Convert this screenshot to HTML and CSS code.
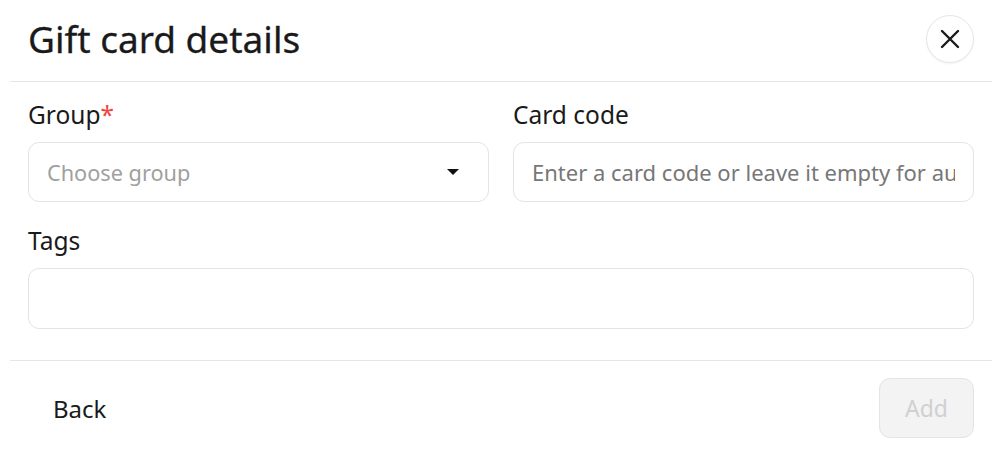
FILE: index.html
```html
<!DOCTYPE html>
<html lang="en">
<head>
  <meta charset="UTF-8" />
  <title>Gift card details</title>
  <link rel="stylesheet" href="styles.css">
</head>
<body>
  <div class="dialog">
    <div class="dialog-header">
      <h1>Gift card details</h1>
      <button class="close-btn" aria-label="Close">
        <svg width="20" height="20" viewBox="0 0 20 20">
          <path d="M2 2 L18 18 M18 2 L2 18" stroke="#1a1a1a" stroke-width="2.4" stroke-linecap="round" fill="none"/>
        </svg>
      </button>
    </div>

    <div class="dialog-body">
      <div class="row two-col">
        <div class="field">
          <label>Group<span class="req">*</span></label>
          <div class="select">
            <span class="placeholder">Choose group</span>
            <span class="caret"></span>
          </div>
        </div>
        <div class="field">
          <label>Card code</label>
          <input class="text-input" type="text" placeholder="Enter a card code or leave it empty for automatic generation">
        </div>
      </div>
      <div class="row">
        <div class="field">
          <label>Tags</label>
          <div class="tags-input"></div>
        </div>
      </div>
    </div>

    <div class="dialog-footer">
      <button class="btn btn-back">Back</button>
      <button class="btn btn-add" disabled>Add</button>
    </div>
  </div>
</body>
</html>
```

FILE: styles.css
```css
body {
  margin: 0;
  background: #fff;
  font-family: 'Noto Sans', sans-serif;
  color: #1a1a1a;
}
.dialog {
  margin: 0 4px 0 10px;
}
.dialog-header {
  display: flex;
  align-items: center;
  justify-content: space-between;
  padding: 15px 18px 18px 18px;
  border-bottom: 1px solid #e6e6e6;
}
.dialog-header h1 {
  margin: 0;
  font-size: 37px;
  font-weight: 400;
  line-height: 48px;
  color: #1a1a1a;
  -webkit-text-stroke: 0.3px #1a1a1a;
}
.close-btn {
  width: 48px;
  height: 48px;
  border-radius: 50%;
  border: 1px solid #e6e6e6;
  background: #fff;
  box-shadow: 0 1px 2px rgba(0,0,0,0.05);
  display: flex;
  align-items: center;
  justify-content: center;
  padding: 0;
  cursor: pointer;
}
.dialog-body {
  padding: 17px 18px 31px 18px;
  border-bottom: 1px solid #e6e6e6;
  display: flex;
  flex-direction: column;
  gap: 23px;
}
.two-col {
  display: grid;
  grid-template-columns: 1fr 1fr;
  gap: 24px;
}
.field label {
  display: block;
  font-size: 24.5px;
  line-height: 32px;
  margin-bottom: 11px;
  color: #1a1a1a;
}
.req {
  color: #f04444;
}
.select,
.text-input,
.tags-input {
  box-sizing: border-box;
  width: 100%;
  height: 60px;
  border: 1px solid #e4e4e4;
  border-radius: 11px;
  background: #fff;
}
.select {
  display: flex;
  align-items: center;
  justify-content: space-between;
  padding: 0 29px 0 18px;
}
.placeholder {
  font-size: 21.7px;
  color: #a0a0a0;
}
.caret {
  width: 0;
  height: 0;
  border-left: 6px solid transparent;
  border-right: 6px solid transparent;
  border-top: 6px solid #111;
}
.text-input {
  padding: 0 18px;
  font-family: inherit;
  font-size: 22px;
  color: #1a1a1a;
  outline: none;
}
.text-input::placeholder {
  color: #777;
}
.tags-input {
  height: 61px;
}
.dialog-footer {
  display: flex;
  align-items: center;
  justify-content: space-between;
  padding: 17px 18px 10px 18px;
}
.btn {
  font-family: inherit;
  font-size: 24px;
  height: 60px;
  padding: 0 25px;
  border-radius: 11px;
}
.btn-back {
  background: transparent;
  border: none;
  color: #1a1a1a;
}
.btn-add {
  font-size: 23px;
  background: #f3f3f3;
  border: 1px solid #e4e4e4;
  color: #d0d0d0;
}
```
